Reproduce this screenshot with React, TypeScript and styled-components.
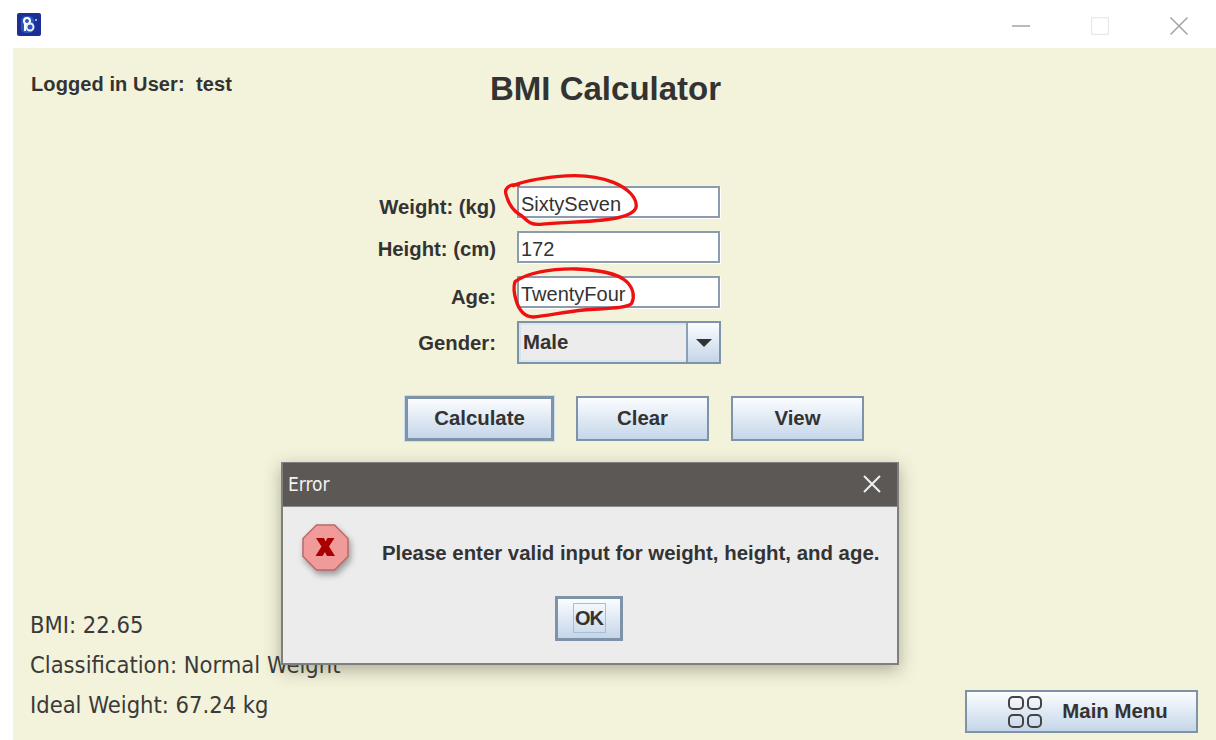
import React, { useState } from 'react';
import styled, { createGlobalStyle } from 'styled-components';

const GlobalStyle = createGlobalStyle`
    html, body {
        margin: 0;
        padding: 0;
        background: #ffffff;
    }

    * {
        box-sizing: border-box;
    }
`;

const WindowDiv = styled.div`
    position: relative;
    width: 1216px;
    height: 740px;
    overflow: hidden;
    background: #ffffff;
    display: flex;
    flex-direction: column;
    font-family: "Liberation Sans", Arial, sans-serif;
    color: #333333;
`;

const TitleBarDiv = styled.div`
    height: 48px;
    flex: none;
    display: flex;
    align-items: flex-start;
    justify-content: space-between;
    padding: 13px 28px 0 17px;
`;

const WindowControlsDiv = styled.div`
    display: flex;
    align-items: flex-start;
    gap: 61px;
    padding-top: 4px;
`;

const ContentDiv = styled.div`
    flex: 1;
    margin-left: 13px;
    background: #f3f2da;
    display: flex;
    flex-direction: column;
    padding: 24px 18px 7px 18px;
`;

const HeaderDiv = styled.div`
    display: flex;
    align-items: flex-start;
`;

const LoggedInSpan = styled.span`
    font-size: 20px;
    font-weight: bold;
    line-height: 24px;
    letter-spacing: 0.1px;
    white-space: pre;
`;

const TitleH1 = styled.h1`
    margin: -2px 0 0 258px;
    font-size: 33px;
    line-height: 38px;
    font-weight: bold;
`;

const FormGrid = styled.div`
    display: grid;
    grid-template-columns: 150px 204px;
    grid-template-rows: 32px 32px 32px 43px;
    column-gap: 21px;
    row-gap: 13px;
    margin: 78px 0 0 315px;
`;

const FieldLabel = styled.label<{ $drop: number }>`
    font-size: 20.3px;
    font-weight: bold;
    line-height: 24px;
    text-align: right;
    white-space: nowrap;
    padding-top: ${props => props.$drop}px;
`;

const TextField = styled.input`
    width: 203px;
    height: 32px;
    padding: 4px 2px 0 2px;
    font-family: "Liberation Sans", Arial, sans-serif;
    font-size: 20px;
    color: #333333;
    background: #ffffff;
    border-style: solid;
    border-width: 2px;
    border-color: #8b9cae;
    box-shadow: 1px 1px 0 #ffffff;
    outline: none;
    border-radius: 0;
`;

const ComboDiv = styled.div`
    display: flex;
    width: 204px;
    height: 43px;
    border: 2px solid #7d93a9;
`;

const ComboValueDiv = styled.div`
    flex: 1;
    display: flex;
    align-items: center;
    padding-left: 2px;
    font-size: 20.4px;
    font-weight: bold;
    background: #ececec;
    border-left: 2px solid #d5e1ee;
    border-top: 2px solid #dbe5f0;
    border-bottom: 2px solid #dbe5f0;
`;

const ComboArrowDiv = styled.div`
    width: 33px;
    display: flex;
    align-items: center;
    justify-content: center;
    border-left: 2px solid #8ca0b5;
    background: linear-gradient(#fbfdff, #c4d5e8);
`;

const ButtonRowDiv = styled.div`
    display: flex;
    gap: 22px;
    margin: 32px 0 0 374px;
`;

const JavaButton = styled.button<{ $width: number; $focused?: boolean }>`
    width: ${props => props.$width}px;
    height: 45px;
    padding: 0;
    font-family: "Liberation Sans", Arial, sans-serif;
    font-size: 20.4px;
    font-weight: bold;
    color: #333333;
    background: linear-gradient(#fbfdff, #c5d6e9);
    border: ${props => (props.$focused ? '3px' : '2px')} solid #7f93a8;
    box-shadow: ${props => (props.$focused ? '0 0 0 1px #c9dcf0' : 'none')};
    border-radius: 0;
`;

const BottomDiv = styled.div`
    flex: 1;
    display: flex;
    align-items: flex-end;
    justify-content: space-between;
`;

const ResultsDiv = styled.div`
    display: flex;
    flex-direction: column;
    padding-bottom: 8px;
    margin-left: -1px;
    font-family: "DejaVu Sans Condensed", "DejaVu Sans", Tahoma, sans-serif;
    font-stretch: condensed;
    font-size: 23.5px;
    line-height: 40px;
    color: #3a3a3a;
`;

const MainMenuButton = styled(JavaButton)`
    height: 43px;
    display: flex;
    align-items: center;
    justify-content: center;
    gap: 20px;
    padding-left: 13px;
`;

const DialogDiv = styled.div`
    position: absolute;
    left: 281px;
    top: 462px;
    width: 618px;
    height: 203px;
    display: flex;
    flex-direction: column;
    background: #ececec;
    border: 2px solid #7f7f7f;
    border-top-width: 1px;
    box-shadow: 0 5px 16px rgba(70, 70, 50, 0.4);
`;

const DialogTitleDiv = styled.div`
    height: 44px;
    flex: none;
    display: flex;
    align-items: center;
    justify-content: space-between;
    padding: 0 16px 2px 5px;
    background: #5c5855;
    border-bottom: 1px solid #8f8c8a;
    color: #f2f2f2;
    font-family: "DejaVu Sans Condensed", "DejaVu Sans", Tahoma, sans-serif;
    font-stretch: condensed;
    font-size: 19px;
`;

const DialogBodyDiv = styled.div`
    flex: 1;
    display: flex;
    flex-direction: column;
    align-items: center;
    padding-top: 17px;
`;

const MessageRowDiv = styled.div`
    align-self: stretch;
    display: flex;
    align-items: flex-start;
    gap: 33px;
    padding-left: 19px;
`;

const MessageSpan = styled.span`
    font-size: 20.4px;
    font-weight: bold;
    line-height: 24px;
    margin-top: 17px;
    white-space: nowrap;
`;

const OkButton = styled.button`
    width: 68px;
    height: 45px;
    margin-top: 25px;
    margin-left: -2px;
    padding: 4px 0;
    display: flex;
    justify-content: center;
    font-family: "Liberation Sans", Arial, sans-serif;
    font-size: 20px;
    font-weight: bold;
    color: #333333;
    background: linear-gradient(#fbfdff, #c5d6e9);
    border: 3px solid #7f93a8;
    border-radius: 0;
`;

const OkInnerSpan = styled.span`
    display: block;
    width: 33px;
    height: 30px;
    line-height: 29px;
    text-align: center;
    border: 1px solid #a9bdd3;
    letter-spacing: -1px;
`;

const ErrorIconSvg = styled.svg`
    flex: none;
    filter: drop-shadow(2px 4px 3px rgba(0, 0, 0, 0.35));
`;

// freehand pen marks around the rejected values
const MarkupSvg = styled.svg`
    position: absolute;
    left: 370px;
    top: 165px;
    width: 370px;
    height: 205px;
    pointer-events: none;
`;

function AppIcon() {
    return (
        <svg width="24" height="23" viewBox="0 0 24 23">
            <rect width="24" height="23" rx="2" fill="#1c2f96" />
            <rect x="4" y="3" width="13" height="17" rx="5" fill="#2b56bd" />
            <circle cx="10" cy="8" r="3" fill="none" stroke="#ffffff" strokeWidth="2" />
            <circle cx="13" cy="14" r="3.5" fill="none" stroke="#e8f0ff" strokeWidth="2" />
            <path d="M8 10v8" stroke="#ffffff" strokeWidth="2" />
            <circle cx="19" cy="7" r="1" fill="#cfe0ff" />
        </svg>
    );
}

function ErrorIcon() {
    return (
        <ErrorIconSvg width="47" height="47" viewBox="0 0 47 47">
            <polygon points="14.500,1 32.500,1 46,14.500 46,32.500 32.500,46 14.500,46 1,32.500 1,14.500" fill="#f09a9a" stroke="#b66a6a" strokeWidth="1.500" />
            <path d="M14 14h8l1.500 3.500 2-3.500h7l-5.500 8.500 6 9.500h-8l-2-4-2.500 4h-7l6-9.500z" fill="#a80000" />
        </ErrorIconSvg>
    );
}

const App = () => {
    const [weight, setWeight] = useState('SixtySeven');
    const [height, setHeight] = useState('172');
    const [age, setAge] = useState('TwentyFour');

    return (
        <WindowDiv>
            <GlobalStyle />
            <TitleBarDiv>
                <AppIcon />
                <WindowControlsDiv>
                    <svg width="18" height="18" viewBox="0 0 18 18">
                        <path d="M0 9h18" stroke="#a3a3a3" strokeWidth="1.500" />
                    </svg>
                    <svg width="18" height="18" viewBox="0 0 18 18">
                        <rect x="0.500" y="0.500" width="17" height="17" fill="none" stroke="#e9e9e9" strokeWidth="1.500" />
                    </svg>
                    <svg width="18" height="18" viewBox="0 0 18 18">
                        <path d="M0.500 0.500l17 17M17.500 0.500l-17 17" stroke="#a3a3a3" strokeWidth="1.500" />
                    </svg>
                </WindowControlsDiv>
            </TitleBarDiv>
            <ContentDiv>
                <HeaderDiv>
                    <LoggedInSpan>Logged in User:  test</LoggedInSpan>
                    <TitleH1>BMI Calculator</TitleH1>
                </HeaderDiv>
                <FormGrid>
                    <FieldLabel $drop={9}>Weight: (kg)</FieldLabel>
                    <TextField value={weight} onChange={e => setWeight(e.target.value)} />
                    <FieldLabel $drop={6}>Height: (cm)</FieldLabel>
                    <TextField value={height} onChange={e => setHeight(e.target.value)} />
                    <FieldLabel $drop={9}>Age:</FieldLabel>
                    <TextField value={age} onChange={e => setAge(e.target.value)} />
                    <FieldLabel $drop={10}>Gender:</FieldLabel>
                    <ComboDiv>
                        <ComboValueDiv>Male</ComboValueDiv>
                        <ComboArrowDiv>
                            <svg width="16" height="8" viewBox="0 0 16 8">
                                <path d="M0 0h16L8 8z" fill="#333333" />
                            </svg>
                        </ComboArrowDiv>
                    </ComboDiv>
                </FormGrid>
                <ButtonRowDiv>
                    <JavaButton $width={149} $focused>Calculate</JavaButton>
                    <JavaButton $width={133}>Clear</JavaButton>
                    <JavaButton $width={133}>View</JavaButton>
                </ButtonRowDiv>
                <BottomDiv>
                    <ResultsDiv>
                        <span>BMI: 22.65</span>
                        <span>Classification: Normal Weight</span>
                        <span>Ideal Weight: 67.24 kg</span>
                    </ResultsDiv>
                    <MainMenuButton $width={233}>
                        <svg width="34" height="32" viewBox="0 0 34 32" fill="none" stroke="#444444" strokeWidth="2">
                            <rect x="1" y="1" width="14" height="12" rx="4" />
                            <rect x="20" y="1" width="13" height="12" rx="4" />
                            <rect x="1" y="19" width="14" height="12" rx="4" />
                            <rect x="20" y="19" width="13" height="12" rx="4" />
                        </svg>
                        Main Menu
                    </MainMenuButton>
                </BottomDiv>
            </ContentDiv>
            <MarkupSvg viewBox="0 0 1110 615" fill="none" stroke="#ee1111" strokeWidth="10" strokeLinecap="round">
                <path d="M445 60C420 55 402 70 408 88C415 115 430 140 455 152C470 165 478 180 510 178C570 172 640 172 700 165C750 160 790 150 798 128C803 100 775 70 730 52C680 32 620 28 560 35C510 40 470 45 430 62" />
                <path d="M435 350C470 325 540 310 620 312C680 315 740 322 770 350C790 370 795 395 785 415C770 432 700 430 640 435C590 440 530 452 490 456C460 455 445 430 438 405C432 385 430 365 435 350" />
            </MarkupSvg>
            <DialogDiv>
                <DialogTitleDiv>
                    Error
                    <svg width="18" height="18" viewBox="0 0 18 18">
                        <path d="M1 1l16 16M17 1L1 17" stroke="#f0f0f0" strokeWidth="2" />
                    </svg>
                </DialogTitleDiv>
                <DialogBodyDiv>
                    <MessageRowDiv>
                        <ErrorIcon />
                        <MessageSpan>Please enter valid input for weight, height, and age.</MessageSpan>
                    </MessageRowDiv>
                    <OkButton><OkInnerSpan>OK</OkInnerSpan></OkButton>
                </DialogBodyDiv>
            </DialogDiv>
        </WindowDiv>
    );
};

export default App;
